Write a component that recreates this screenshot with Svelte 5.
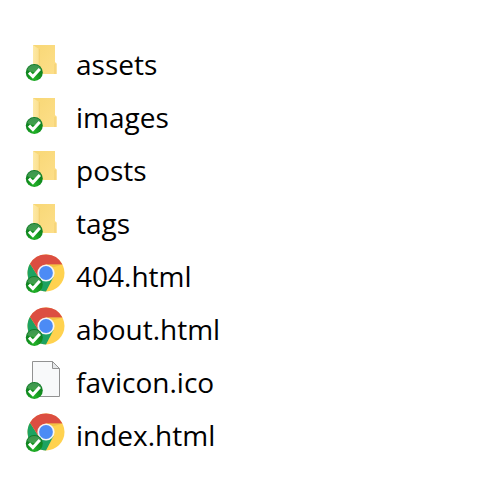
<script>
  const entries = [
    { name: 'assets', kind: 'folder' },
    { name: 'images', kind: 'folder' },
    { name: 'posts', kind: 'folder' },
    { name: 'tags', kind: 'folder' },
    { name: '404.html', kind: 'chrome' },
    { name: 'about.html', kind: 'chrome' },
    { name: 'favicon.ico', kind: 'file' },
    { name: 'index.html', kind: 'chrome' }
  ];
</script>

<svg class="defs" width="0" height="0" aria-hidden="true">
  <defs>
    <radialGradient id="badge" cx="50%" cy="85%" r="80%">
      <stop offset="0" stop-color="#22b428" />
      <stop offset="0.55" stop-color="#118c1e" />
      <stop offset="1" stop-color="#0f7a26" />
    </radialGradient>
    <linearGradient id="front" x1="0" y1="0" x2="1" y2="0">
      <stop offset="0" stop-color="#fde9a6" />
      <stop offset="1" stop-color="#fbe08f" />
    </linearGradient>
    <linearGradient id="back" x1="0" y1="0" x2="1" y2="1">
      <stop offset="0" stop-color="#f8d775" />
      <stop offset="1" stop-color="#fddf8a" />
    </linearGradient>
  </defs>
</svg>

<ul>
  {#each entries as entry}
    <li>
      <svg class="icon" viewBox="0 0 50 53" aria-hidden="true">
        {#if entry.kind === 'folder'}
          <path d="M13 7h22v17l1.500 1.500V36H18L13 32z" fill="url(#back)" />
          <path d="M34 26l2.500-.5V36H34z" fill="#f7d67c" />
          <path d="M13 7l6 4v28l-6-4z" fill="url(#front)" />
          <path d="M19.200 11v27" stroke="#efca6c" stroke-width=".7" />
        {:else if entry.kind === 'chrome'}
          <circle cx="26" cy="23" r="18.500" fill="#ffd24f" />
          <path d="M9.980 13.750A18.500 18.500 0 0 0 26 41.500L33.400 27.300 26 23 18.600 27.300z" fill="#1da261" />
          <path d="M9.980 13.750A18.500 18.500 0 0 1 42.400 14.500H26L18.600 27.300z" fill="#dc4e41" />
          <path d="M26 14.500h16.400l-9 2.800z" fill="#e7b13a" opacity=".5" />
          <circle cx="26" cy="23" r="8.600" fill="#f5f5f5" />
          <circle cx="26" cy="23" r="6.900" fill="#4c8bf5" />
        {:else}
          <path d="M12.500 5.500h20l7 7v28h-27z" fill="#f8f9fa" stroke="#929292" />
          <path d="M32.500 5.500v7h7z" fill="#e5e7e9" stroke="#929292" stroke-linejoin="round" />
        {/if}
        <circle cx="14.300" cy="34.600" r="8.500" fill="url(#badge)" />
        <path d="M7.200 32a7.500 7.500 0 0 1 14.200 0q-3 2-7.100 2t-7.100-2z" fill="#fff" opacity=".2" />
        <path d="M9 34.600l3.900 4L19.800 31" fill="none" stroke="#fff" stroke-width="3" />
      </svg>
      <span>{entry.name}</span>
    </li>
  {/each}
</ul>

<style>
  :global(body) {
    margin: 0;
    background: #fff;
  }
  .defs {
    position: absolute;
  }
  ul {
    margin: 0;
    padding: 38px 20px 24px;
    list-style: none;
    font-family: 'Segoe UI', 'Open Sans', 'Noto Sans', sans-serif;
    font-size: 28px;
    line-height: 53px;
    color: #000;
  }
  li {
    display: flex;
    align-items: center;
    gap: 6px;
    height: 53px;
  }
  .icon {
    flex: none;
    width: 50px;
    height: 53px;
  }
</style>
